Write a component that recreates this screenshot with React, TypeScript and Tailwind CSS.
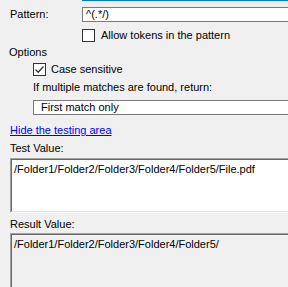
function CheckBox({ checked }: { checked?: boolean }) {
  return (
    <div className="flex h-[13px] w-[13px] shrink-0 items-center justify-center border border-[#333333] bg-white">
      {checked && (
        <svg width="11" height="11" viewBox="0 0 11 11" fill="none">
          <path d="M1.5 5.5 L4.2 8.2 L9.5 2.5" stroke="#333333" strokeWidth="1.3" />
        </svg>
      )}
    </div>
  );
}

function Sunken({ className, children }: { className: string; children: React.ReactNode }) {
  return (
    <div className={`ml-[10px] border-t border-l border-t-[#a0a0a0] border-l-[#a0a0a0] border-b border-b-white ${className}`}>
      <div className="h-full border-t border-l border-t-[#696969] border-l-[#696969] border-b border-b-[#e3e3e3] pl-[2px] pt-[3px]">
        {children}
      </div>
    </div>
  );
}

export default function App() {
  return (
    <div
      className="flex h-[287px] w-[288px] flex-col overflow-hidden bg-[#f0f0f0] text-[11px] leading-[13px] text-black"
      style={{ fontFamily: '"Liberation Sans", Arial, sans-serif' }}
    >
      <div className="flex h-[5px]">
        <div className="ml-[82px] flex-1 border-l border-b border-[#0078d7] bg-white" />
      </div>

      <div className="mt-[6px] flex h-[20px] items-center">
        <span className="w-[82px] pl-[10px]">Pattern:</span>
        <div className="flex h-full flex-1 items-center border border-r-0 border-[#7a7a7a] bg-white pl-[3px]">^(.*/)</div>
      </div>

      <div className="mt-[7px] flex h-[13px] items-center gap-[6px] pl-[82px]">
        <CheckBox />
        <span>Allow tokens in the pattern</span>
      </div>

      <div className="mt-[4px] h-[13px] pl-[9px]">Options</div>

      <div className="mt-[4px] flex h-[13px] items-center gap-[5px] pl-[33px]">
        <CheckBox checked />
        <span>Case sensitive</span>
      </div>

      <div className="mt-[5px] h-[13px] pl-[33px]">If multiple matches are found, return:</div>

      <div className="mt-[6px] ml-[33px] flex h-[21px] items-center border border-r-0 border-[#7a7a7a] bg-white pl-[7px]">
        First match only
      </div>

      <div className="mt-[9px] h-[13px] pl-[10px]">
        <span className="text-[#0000ff] underline">Hide the testing area</span>
      </div>

      <div className="mt-[5px] h-[13px] pl-[10px]">Test Value:</div>

      <Sunken className="mt-[3px] h-[55px] shrink-0 bg-white">/Folder1/Folder2/Folder3/Folder4/Folder5/File.pdf</Sunken>

      <div className="mt-[5px] h-[13px] pl-[10px]">Result Value:</div>

      <Sunken className="mt-[2px] h-[60px] shrink-0 bg-[#f0f0f0]">/Folder1/Folder2/Folder3/Folder4/Folder5/</Sunken>
    </div>
  );
}
